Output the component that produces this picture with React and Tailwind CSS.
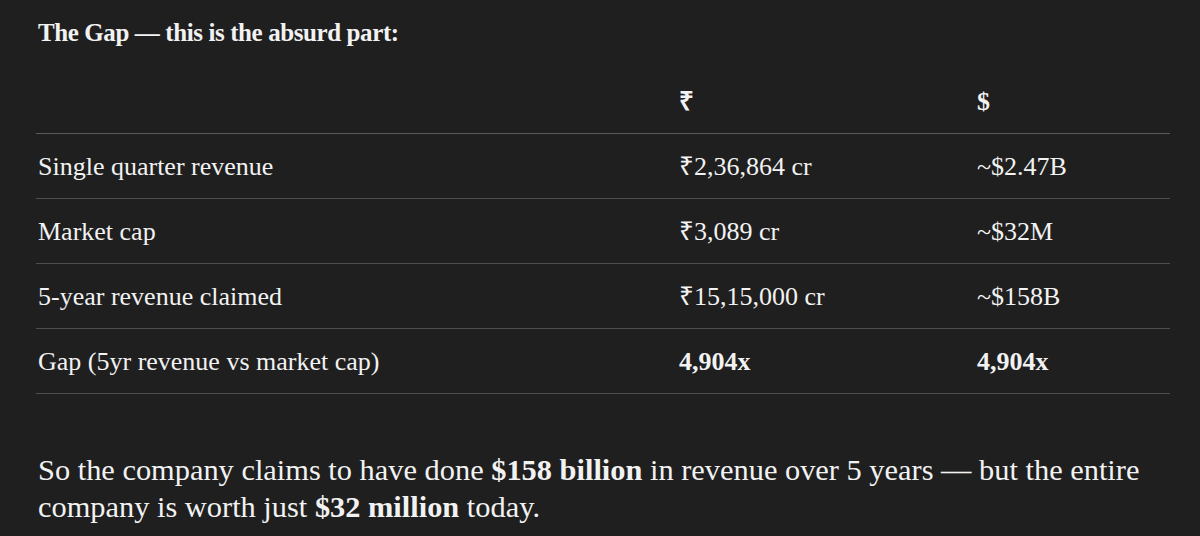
import React from 'react';

const rows = [
  { label: 'Single quarter revenue', inr: '₹2,36,864 cr', usd: '~$2.47B' },
  { label: 'Market cap', inr: '₹3,089 cr', usd: '~$32M' },
  { label: '5-year revenue claimed', inr: '₹15,15,000 cr', usd: '~$158B' },
  { label: 'Gap (5yr revenue vs market cap)', inr: '4,904x', usd: '4,904x', bold: true },
];

function Row({ label, inr, usd, bold }) {
  return (
    <div className="grid grid-cols-[641px_298px_1fr] items-center h-[65px] border-b border-[#4e4e4e] pl-[2px]">
      <div>{label}</div>
      <div className={bold ? 'font-bold' : ''}>{inr}</div>
      <div className={bold ? 'font-bold' : ''}>{usd}</div>
    </div>
  );
}

export default function App() {
  return (
    <div
      className="w-[1200px] h-[536px] bg-[#1f1f1f] text-[#f2f2f2] overflow-hidden pl-[36px] pr-[30px]"
      style={{ fontFamily: '"Liberation Serif", "Times New Roman", serif' }}
    >
      <h2 className="pt-[17px] text-[25px] leading-[32px] font-bold tracking-[-0.4px] pl-[2px]">
        The Gap — this is the absurd part:
      </h2>

      <div className="mt-[20px] text-[26px]">
        <div className="grid grid-cols-[641px_298px_1fr] items-center h-[65px] border-b border-[#5a5a5a] pl-[2px] font-bold">
          <div></div>
          <div>₹</div>
          <div>$</div>
        </div>
        {rows.map((r) => (
          <Row key={r.label} {...r} />
        ))}
      </div>

      <p className="mt-[58px] pl-[2px] text-[30.4px] leading-[37px]">
        So the company claims to have done <b>$158 billion</b> in revenue over 5 years — but the entire company is worth just <b>$32 million</b> today.
      </p>
    </div>
  );
}
